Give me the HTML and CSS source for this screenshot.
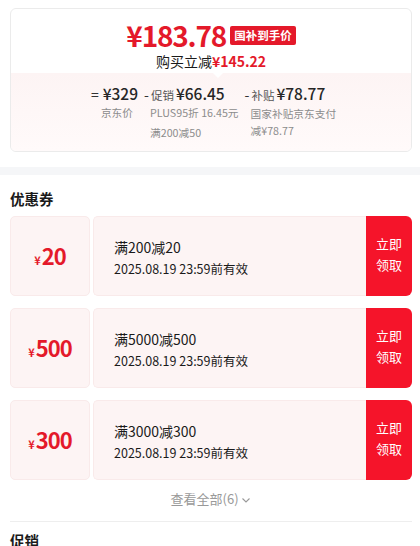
FILE: index.html
```html
<!DOCTYPE html>
<html lang="zh-CN">
<head>
    <meta charset="UTF-8">
    <meta name="viewport" content="width=device-width, initial-scale=1.0">
    <title>优惠券</title>
    <link rel="stylesheet" href="styles.css">
</head>
<body>

    <div class="price-card">
        <div class="price-top">
            <div class="price-line">
                <span class="price-big">¥183.78</span>
                <span class="price-tag">国补到手价</span>
            </div>
            <div class="price-save">购买立减<b>¥145.22</b></div>
        </div>
        <div class="price-bottom">
            <div class="calc">
                <div class="calc-col">
                    <div class="calc-head"><span class="op eq">=</span><span class="num">¥329</span></div>
                    <div class="calc-note">京东价</div>
                </div>
                <div class="calc-col">
                    <div class="calc-head"><span class="op">-</span><span class="lbl">促销</span><span class="num">¥66.45</span></div>
                    <div class="calc-note">PLUS95折 16.45元</div>
                    <div class="calc-note">满200减50</div>
                </div>
                <div class="calc-col">
                    <div class="calc-head"><span class="op">-</span><span class="lbl">补贴</span><span class="num">¥78.77</span></div>
                    <div class="calc-note tight">国家补贴京东支付<br>减¥78.77</div>
                </div>
            </div>
        </div>
    </div>

    <div class="gap-bar"></div>

    <div class="section">
        <h3>优惠券</h3>
        <div id="couponList" class="coupon-list"></div>
        <div class="more">查看全部(6)
            <svg width="10" height="10" viewBox="0 0 10 10"><path d="M1.5 3.5 L5 7 L8.5 3.5" fill="none" stroke="#999" stroke-width="1.1"/></svg>
        </div>
    </div>

    <div class="section promo">
        <h3>促销</h3>
    </div>

    <script>
        const coupons = [
            { amount: 20, rule: "满200减20", expire: "2025.08.19 23:59前有效" },
            { amount: 500, rule: "满5000减500", expire: "2025.08.19 23:59前有效" },
            { amount: 300, rule: "满3000减300", expire: "2025.08.19 23:59前有效" }
        ];

        let list = document.getElementById("couponList");
        coupons.forEach(c => {
            list.innerHTML += `<div class="coupon">
                <div class="coupon-left"><span class="yen">¥</span><span class="amt">${c.amount}</span></div>
                <div class="coupon-mid">
                    <div class="rule">${c.rule}</div>
                    <div class="expire">${c.expire}</div>
                </div>
                <div class="coupon-btn">立即<br>领取</div>
            </div>`;
        });
    </script>

</body>
</html>
```

FILE: styles.css
```css
/* General Styles */
* {
    margin: 0;
    padding: 0;
    box-sizing: border-box;
    font-family: "Noto Sans CJK SC", "Noto Sans", sans-serif;
}

body {
    background: white;
    color: #1a1a1a;
    width: 420px;
    height: 546px;
    overflow: hidden;
    padding-top: 8px;
}

/* Price Card */
.price-card {
    margin: 0 8px 0 10px;
    border: 1px solid #ebebeb;
    border-radius: 6px;
    overflow: hidden;
}

.price-top {
    position: relative;
    text-align: center;
    padding: 9px 0 3px;
}

.price-top::after {
    content: "";
    position: absolute;
    left: 202px;
    bottom: -5px;
    border-left: 5px solid transparent;
    border-right: 5px solid transparent;
    border-top: 5px solid white;
    z-index: 1;
}

.price-line {
    display: flex;
    justify-content: center;
    align-items: center;
    gap: 4px;
    height: 34px;
}

.price-big {
    color: #e4192a;
    font-size: 28px;
    font-weight: bold;
    letter-spacing: -1.2px;
    line-height: 34px;
}

.price-tag {
    background: #e4192a;
    color: white;
    font-size: 11.5px;
    font-weight: bold;
    padding: 0 4px;
    border-radius: 2px;
    line-height: 19px;
    margin-top: 1px;
}

.price-save {
    font-size: 14px;
    line-height: 18px;
}

.price-save b {
    color: #e4192a;
}

.price-bottom {
    background: linear-gradient(to bottom, #fdf4f4, #fffafa);
    padding: 10px 0 8px;
}

.calc {
    display: flex;
    justify-content: center;
    gap: 3px;
    padding-left: 2px;
}

.calc-col {
    display: flex;
    flex-direction: column;
}

.calc-head {
    display: flex;
    align-items: baseline;
    height: 20px;
    line-height: 20px;
}

.op {
    font-size: 14px;
    color: #333;
    margin: 0 2px 0 3px;
}

.op.eq {
    margin-right: 4px;
}

.lbl {
    font-size: 11.5px;
    color: #555;
    margin-right: 2px;
}

.num {
    font-size: 15.5px;
    font-weight: 500;
    color: #262626;
}

.calc-note {
    font-size: 10.7px;
    color: #8c8c8c;
    line-height: 20px;
    padding-left: 9px;
    white-space: nowrap;
}

.calc-col:first-child .calc-note {
    padding-left: 13px;
}

.calc-note.tight {
    line-height: 17px;
    padding-top: 2px;
}

.gap-bar {
    height: 8px;
    background: #f5f6f8;
    margin-top: 15px;
}

/* Coupon Section */
.section {
    padding: 0 8px 0 10px;
}

h3 {
    font-size: 14.5px;
    font-weight: bold;
    color: #1a1a1a;
    line-height: 22px;
    padding: 13px 0 6px;
}

.coupon-list {
    display: flex;
    flex-direction: column;
    gap: 12px;
}

.coupon {
    display: flex;
    height: 80px;
}

.coupon-left {
    width: 80px;
    background: #fdf4f4;
    border: 1px solid #f9eaea;
    border-radius: 5px;
    display: flex;
    justify-content: center;
    align-items: baseline;
    padding-top: 24px;
    color: #e4192a;
    font-weight: bold;
}

.yen {
    font-size: 11px;
    margin-right: 1px;
}

.amt {
    font-size: 22px;
    line-height: 28px;
    letter-spacing: -1px;
}

.coupon-mid {
    flex: 1;
    margin-left: 3px;
    background: #fdf4f4;
    border: 1px solid #f9eaea;
    border-right: none;
    border-radius: 5px 0 0 5px;
    padding: 19px 0 0 20px;
}

.rule {
    font-size: 14px;
    line-height: 22px;
}

.expire {
    font-size: 12.5px;
    line-height: 22px;
}

.coupon-btn {
    width: 46px;
    background: #f5142a;
    color: white;
    border-radius: 0 6px 6px 0;
    font-size: 13px;
    line-height: 21px;
    display: flex;
    align-items: center;
    justify-content: center;
    text-align: center;
    padding-bottom: 4px;
}

.more {
    text-align: center;
    font-size: 13px;
    color: #999;
    padding: 9px 0 12px;
    line-height: 20px;
}

.more svg {
    vertical-align: -1px;
}

.promo h3 {
    border-top: 1px solid #eee;
    padding-top: 8px;
}
```
